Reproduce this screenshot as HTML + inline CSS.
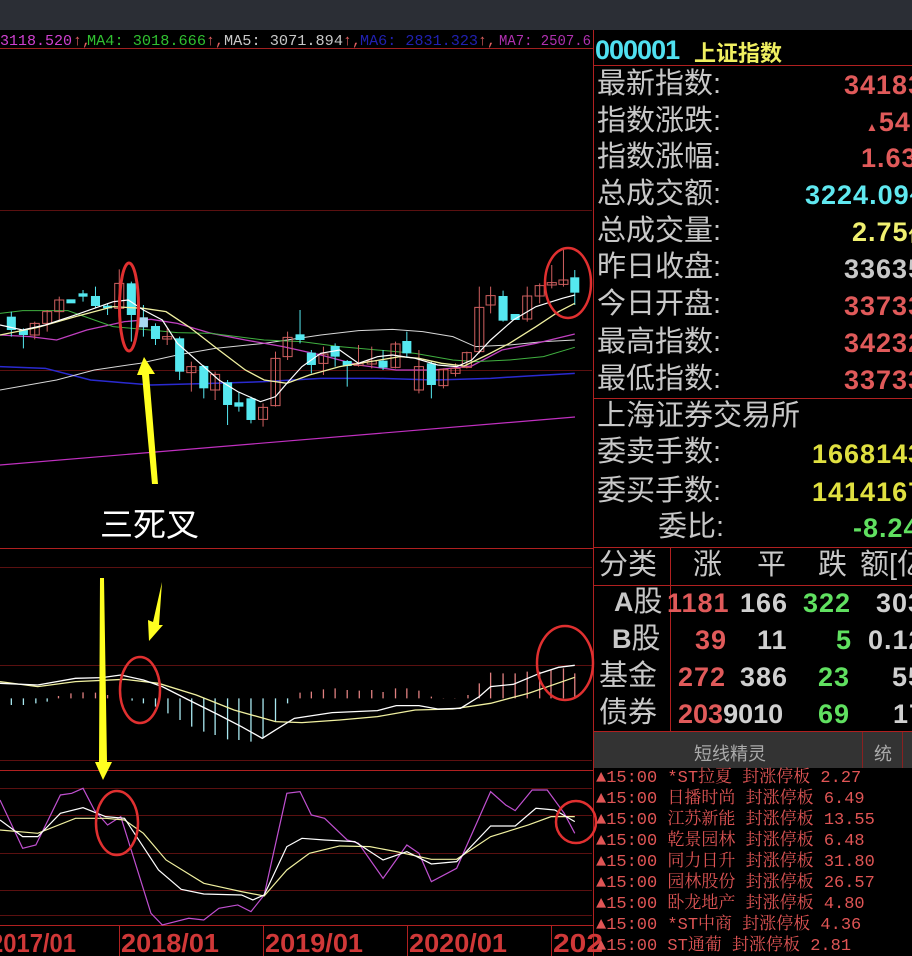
<!DOCTYPE html>
<html><head><meta charset="utf-8"><style>
html,body{margin:0;padding:0;background:#000;width:912px;height:956px;overflow:hidden;position:relative}
.t{position:absolute;white-space:nowrap;line-height:1}
.lb{font-family:"Liberation Sans","Noto Sans CJK SC",sans-serif;font-size:29px;color:#c8c8c8;left:597px}
.v{font-family:"Liberation Sans",sans-serif;font-weight:bold;font-size:27px;letter-spacing:1px}
.li{font-family:"Liberation Mono","Noto Serif CJK SC",monospace;font-size:17px;color:#e05555}
</style></head><body>
<div style="position:absolute;left:0;top:0;width:912px;height:30px;background:#2b2e35"></div>
<svg width="912" height="956" style="position:absolute;left:0;top:0">
<defs><style>.n{vector-effect:non-scaling-stroke;fill:none}</style></defs>
<g font-family="Liberation Mono,monospace" font-size="15">
<text x="0" y="45" fill="#d040d0" textLength="72" lengthAdjust="spacingAndGlyphs">3118.520</text><text x="73" y="45" fill="#e06060">↑,</text>
<text x="87" y="45" fill="#30c030" textLength="119" lengthAdjust="spacingAndGlyphs">MA4: 3018.666</text><text x="206" y="45" fill="#e06060">↑,</text>
<text x="224" y="45" fill="#c8c8c8" textLength="119" lengthAdjust="spacingAndGlyphs">MA5: 3071.894</text><text x="343" y="45" fill="#e06060">↑,</text>
<text x="360" y="45" fill="#2020b0" textLength="118" lengthAdjust="spacingAndGlyphs">MA6: 2831.323</text><text x="478" y="45" fill="#e06060">↑,</text>
<text x="499" y="45" fill="#b030b0" textLength="92" lengthAdjust="spacingAndGlyphs">MA7: 2507.6</text>
</g>
<line x1="0" y1="48.5" x2="593" y2="48.5" stroke="#a02020"/>
<g stroke="#5a1010">
<line x1="0" y1="210.5" x2="592" y2="210.5"/><line x1="0" y1="370.5" x2="592" y2="370.5"/>
<line x1="0" y1="567.5" x2="592" y2="567.5"/><line x1="0" y1="665.5" x2="592" y2="665.5"/><line x1="0" y1="760.5" x2="592" y2="760.5"/>
<line x1="0" y1="788.5" x2="592" y2="788.5"/><line x1="0" y1="815.5" x2="592" y2="815.5"/><line x1="0" y1="853.5" x2="592" y2="853.5"/><line x1="0" y1="890.5" x2="592" y2="890.5"/><line x1="0" y1="915.5" x2="592" y2="915.5"/>
</g>
<g stroke="#b02020">
<line x1="0" y1="548.5" x2="593" y2="548.5"/><line x1="0" y1="770.5" x2="593" y2="770.5"/><line x1="0" y1="925.5" x2="593" y2="925.5"/>
<line x1="593.5" y1="30" x2="593.5" y2="956"/>
<line x1="119.5" y1="926" x2="119.5" y2="956"/><line x1="263.5" y1="926" x2="263.5" y2="956"/><line x1="407.5" y1="926" x2="407.5" y2="956"/><line x1="551.5" y1="926" x2="551.5" y2="956"/>
</g>
<g font-family="Liberation Sans,sans-serif" font-weight="bold" font-size="26" fill="#d03838">
<text x="-10" y="952" textLength="86" lengthAdjust="spacingAndGlyphs">2017/01</text>
<text x="121" y="952" textLength="98" lengthAdjust="spacingAndGlyphs">2018/01</text>
<text x="265" y="952" textLength="98" lengthAdjust="spacingAndGlyphs">2019/01</text>
<text x="409" y="952" textLength="98" lengthAdjust="spacingAndGlyphs">2020/01</text>
<text x="553" y="952" textLength="50" lengthAdjust="spacingAndGlyphs">202</text>
</g>
<line x1="0" y1="465" x2="575" y2="417" stroke="#c030c0" stroke-width="1.2"/>
<g transform="translate(0,240) scale(0.3774,0.3333)">
<polyline class="n" stroke="#2a2ad0" stroke-width="1.5" points="0,380 120,385 240,420 400,435 560,430 700,425 850,415 1000,415 1150,420 1300,415 1400,408 1523,400"/>
<polyline class="n" stroke="#d8d8d8" points="0,450 150,420 250,390 370,370 470,345 570,325 700,310 850,285 950,272 1040,268 1120,275 1200,290 1260,320 1350,315 1440,305 1523,300"/>
<polyline class="n" stroke="#c040c0" stroke-width="1.3" points="0,285 80,290 150,300 230,270 330,245 400,238 470,250 560,280 650,300 750,320 850,345 950,375 1050,390 1150,390 1250,378 1330,330 1420,310 1523,282"/>
<polyline class="n" stroke="#40b040" points="0,220 60,212 180,212 250,240 300,260 380,268 470,278 560,280 700,300 800,305 900,320 1000,330 1100,340 1200,360 1260,365 1350,360 1440,350 1523,322"/>
<path class="n" stroke="#d06060" d="M92 245V298M125 210V275M157 170V240M316 88V210M443 265V315M507 365V455M570 395V480M697 490V560M730 335V500M762 275V360M857 320V405M950 315V380M985 320V385M1048 305V385M1110 330V460M1175 385V445M1207 370V410M1237 335V385M1270 140V340M1300 140V220M1397 140V245M1430 130V190M1462 75V145M1493 30V140"/>
<g fill="#000" stroke="#d06060">
<rect class="n" x="80" y="250" width="24" height="35" fill="#000"/><rect class="n" x="113" y="215" width="24" height="35" fill="#000"/><rect class="n" x="145" y="180" width="24" height="35" fill="#000"/><rect class="n" x="304" y="130" width="24" height="75" fill="#000"/><rect class="n" x="431" y="290" width="24" height="7" fill="#000"/><rect class="n" x="495" y="380" width="24" height="18" fill="#000"/><rect class="n" x="558" y="403" width="24" height="47" fill="#000"/><rect class="n" x="685" y="502" width="24" height="36" fill="#000"/><rect class="n" x="718" y="355" width="24" height="142" fill="#000"/><rect class="n" x="750" y="292" width="24" height="58" fill="#000"/><rect class="n" x="845" y="342" width="24" height="28" fill="#000"/><rect class="n" x="938" y="370" width="24" height="6" fill="#000"/><rect class="n" x="973" y="363" width="24" height="9" fill="#000"/><rect class="n" x="1036" y="312" width="24" height="70" fill="#000"/><rect class="n" x="1098" y="380" width="24" height="70" fill="#000"/><rect class="n" x="1163" y="388" width="24" height="49" fill="#000"/><rect class="n" x="1195" y="385" width="24" height="15" fill="#000"/><rect class="n" x="1225" y="338" width="24" height="44" fill="#000"/><rect class="n" x="1258" y="202" width="24" height="133" fill="#000"/><rect class="n" x="1288" y="167" width="24" height="28" fill="#000"/><rect class="n" x="1385" y="168" width="24" height="69" fill="#000"/><rect class="n" x="1418" y="137" width="24" height="31" fill="#000"/><rect class="n" x="1450" y="128" width="24" height="7" fill="#000"/><rect class="n" x="1481" y="120" width="24" height="13" fill="#000"/>
</g>
<path class="n" stroke="#55e8f0" d="M30 215V290M62 265V325M220 150V185M253 140V205M285 190V225M348 125V305M380 195V290M412 250V315M476 290V420M540 375V475M603 420V555M633 455V515M665 470V550M795 210V310M825 330V400M888 310V380M920 360V440M1015 330V390M1078 275V350M1143 365V475M1333 152V245M1523 90V195"/>
<g fill="#55e8f0">
<rect x="18" y="230" width="24" height="40"/><rect x="50" y="270" width="24" height="15"/><rect x="176" y="178" width="24" height="12"/><rect x="208" y="160" width="24" height="10"/><rect x="241" y="168" width="24" height="30"/><rect x="273" y="197" width="24" height="8"/><rect x="336" y="130" width="24" height="95"/><rect x="368" y="232" width="24" height="30" fill="#a8d8f0"/><rect x="400" y="258" width="24" height="39"/><rect x="464" y="295" width="24" height="100"/><rect x="528" y="378" width="24" height="67"/><rect x="591" y="427" width="24" height="68"/><rect x="621" y="487" width="24" height="13"/><rect x="653" y="475" width="24" height="65"/><rect x="783" y="283" width="24" height="17"/><rect x="813" y="338" width="24" height="37"/><rect x="876" y="318" width="24" height="32"/><rect x="908" y="363" width="24" height="15"/><rect x="1003" y="362" width="24" height="21"/><rect x="1066" y="303" width="24" height="37"/><rect x="1131" y="370" width="24" height="65"/><rect x="1321" y="168" width="24" height="74"/><rect x="1353" y="222" width="24" height="18"/><rect x="1511" y="112" width="24" height="46"/>
</g>
<polyline class="n" stroke="#f0f0a0" stroke-width="1.3" points="0,285 100,262 200,230 300,200 380,205 440,215 500,260 580,330 650,390 700,420 760,430 820,405 900,380 980,365 1060,350 1110,355 1170,370 1230,378 1290,345 1350,310 1420,260 1480,215 1523,190"/>
<polyline class="n" stroke="#ffffff" stroke-width="1.2" points="0,255 60,270 120,255 200,225 300,185 340,180 380,210 430,240 470,310 530,370 580,420 630,455 690,485 730,470 760,430 800,380 850,340 900,330 950,370 1000,350 1040,345 1100,355 1160,375 1210,380 1250,360 1300,300 1360,240 1420,200 1490,175 1523,165"/>
</g>
<ellipse cx="129" cy="307" rx="9.5" ry="44" fill="none" stroke="#e03030" stroke-width="3"/>
<ellipse cx="568" cy="283" rx="23" ry="35" fill="none" stroke="#e03030" stroke-width="2.5"/>
<polygon points="152,484 158,484 149,374 155,374 144,357 137,375 142,375" fill="#ffff20"/>
<text x="100" y="536" font-family="Liberation Sans,Noto Sans CJK SC,sans-serif" font-size="33" fill="#fff">三死叉</text>
<g transform="translate(0,540) scale(0.3774,0.3333)">
<path class="n" stroke="#a8e8f0" stroke-width="1.3" d="M30 475V495M62 475V495M95 475V490M125 475V485M350 475V482M380 475V490M412 475V500M445 475V520M477 475V540M508 475V560M540 475V575M570 475V585M603 475V598M633 475V600M665 475V605M697 475V595M730 475V545M762 475V490"/>
<path class="n" stroke="#e08080" stroke-width="1.3" d="M155 475V468M188 475V460M220 475V457M253 475V458M285 475V465M795 475V458M825 475V455M857 475V448M888 475V445M920 475V450M952 475V452M985 475V450M1015 475V456M1048 475V445M1078 475V445M1110 475V452M1143 475V470M1175 475V476M1205 475V476M1240 475V465M1270 475V430M1300 475V398M1333 475V400M1365 475V400M1397 475V395M1430 475V395M1460 475V390M1493 475V385M1523 475V400"/>
<polyline class="n" stroke="#f0f0a0" stroke-width="1.3" points="0,425 100,440 200,425 330,418 420,430 520,465 620,510 730,545 800,548 900,540 1000,530 1100,510 1200,507 1300,490 1400,460 1523,412"/>
<polyline class="n" stroke="#fff" stroke-width="1.3" points="0,430 100,435 200,415 270,413 320,405 380,420 430,440 500,480 580,525 640,560 695,595 730,570 780,535 880,518 1000,512 1050,497 1110,497 1160,507 1220,505 1270,470 1300,440 1360,433 1430,400 1480,382 1523,376"/>
<polyline class="n" stroke="#c050d0" stroke-width="1.2" points="0,780 60,925 95,915 160,765 190,760 220,745 250,810 285,855 320,830 400,1120 430,1155 500,1135 540,1140 580,1105 630,1095 665,1115 700,1065 760,760 795,755 825,825 860,835 920,900 950,910 1015,1015 1078,915 1110,940 1143,1025 1210,985 1300,755 1340,795 1365,812 1410,750 1450,750 1495,820 1523,880"/>
<polyline class="n" stroke="#f0f0a0" stroke-width="1.2" points="0,870 100,880 200,835 280,835 330,840 380,880 440,960 540,1030 640,1055 700,1068 760,990 820,940 900,918 980,920 1050,935 1143,958 1210,958 1300,890 1400,855 1460,830 1523,830"/>
<polyline class="n" stroke="#fff" stroke-width="1.2" points="0,840 60,890 100,890 160,820 220,803 280,830 330,835 420,990 480,1048 540,1062 640,1065 670,1080 700,1065 760,920 800,895 860,900 940,905 1015,960 1078,935 1143,972 1210,965 1300,858 1365,858 1420,805 1470,810 1523,845"/>
</g>
<ellipse cx="140" cy="690" rx="20" ry="33" fill="none" stroke="#e03030" stroke-width="2.5"/>
<ellipse cx="565" cy="663" rx="28" ry="37" fill="none" stroke="#e03030" stroke-width="2.5"/>
<ellipse cx="117" cy="823" rx="21" ry="32" fill="none" stroke="#e03030" stroke-width="2.5"/>
<ellipse cx="576" cy="822" rx="20" ry="21" fill="none" stroke="#e03030" stroke-width="2.5"/>
<polygon points="100,578 104,578 107,762 112,762 103,780 95,762 99,762" fill="#ffff20"/>
<polygon points="162,582 159,625 163,625 149,641 148,620 153,622" fill="#ffff20"/>
<g stroke="#b02020">
<line x1="594" y1="65.5" x2="912" y2="65.5"/><line x1="594" y1="398.5" x2="912" y2="398.5"/><line x1="594" y1="547.5" x2="912" y2="547.5"/><line x1="594" y1="585.5" x2="912" y2="585.5"/><line x1="594" y1="731.5" x2="912" y2="731.5"/>
<line x1="670.5" y1="548" x2="670.5" y2="731"/>
</g>
</svg>
<div class="t" style="left:595px;top:35px;font:bold 27px 'Liberation Sans',sans-serif;color:#50e0f0;letter-spacing:-1px">000001</div>
<div class="t" style="left:694px;top:36px;font:bold 22px 'Noto Sans CJK SC',sans-serif;color:#f0f060">上证指数</div>
<div class="t lb" style="top:70px">最新指数:</div>
<div class="t lb" style="top:107px">指数涨跌:</div>
<div class="t lb" style="top:143px">指数涨幅:</div>
<div class="t lb" style="top:180px">总成交额:</div>
<div class="t lb" style="top:217px">总成交量:</div>
<div class="t lb" style="top:253px">昨日收盘:</div>
<div class="t lb" style="top:290px">今日开盘:</div>
<div class="t lb" style="top:328px">最高指数:</div>
<div class="t lb" style="top:365px">最低指数:</div>
<div class="t lb" style="top:402px">上海证券交易所</div>
<div class="t lb" style="top:438px">委卖手数:</div>
<div class="t lb" style="top:477px">委买手数:</div>
<div class="t lb" style="top:513px;left:658px">委比:</div>
<div class="t v" style="left:844px;top:72px;color:#e05a5a">34183</div>
<div class="t v" style="left:866px;top:109px;color:#e05a5a"><span style="font-size:12px">▲</span>547</div>
<div class="t v" style="left:861px;top:145px;color:#e05a5a">1.63</div>
<div class="t v" style="left:805px;top:182px;color:#60e8f0">3224.09<span style="font-size:18px">亿</span></div>
<div class="t v" style="left:852px;top:219px;color:#f0f070">2.75<span style="font-size:18px">亿</span></div>
<div class="t v" style="left:844px;top:256px;color:#c8c8c8">33635</div>
<div class="t v" style="left:844px;top:293px;color:#e05a5a">33733</div>
<div class="t v" style="left:844px;top:330px;color:#e05a5a">34232</div>
<div class="t v" style="left:844px;top:367px;color:#e05a5a">33733</div>
<div class="t v" style="left:812px;top:441px;color:#e0e040">1668143</div>
<div class="t v" style="left:812px;top:479px;color:#e0e040">1414167</div>
<div class="t v" style="left:853px;top:515px;color:#60e060">-8.24</div>
<div class="t lb" style="top:551px;left:599px">分类</div>
<div class="t lb" style="top:551px;left:693px">涨</div>
<div class="t lb" style="top:551px;left:757px">平</div>
<div class="t lb" style="top:551px;left:818px">跌</div>
<div class="t lb" style="top:551px;left:860px">额[亿</div>
<div class="t lb" style="top:588px;left:614px"><b style="font-size:27px">A</b>股</div>
<div class="t lb" style="top:625px;left:612px"><b style="font-size:27px">B</b>股</div>
<div class="t lb" style="top:662px;left:599px">基金</div>
<div class="t lb" style="top:699px;left:599px">债券</div>
<div class="t v" style="left:667px;top:590px;color:#e05a5a">1181</div><div class="t v" style="left:740px;top:590px;color:#d0d0d0">166</div><div class="t v" style="left:803px;top:590px;color:#60e060">322</div><div class="t v" style="left:876px;top:590px;color:#d0d0d0">303</div>
<div class="t v" style="left:695px;top:627px;color:#e05a5a">39</div><div class="t v" style="left:757px;top:627px;color:#d0d0d0">11</div><div class="t v" style="left:836px;top:627px;color:#60e060">5</div><div class="t v" style="left:868px;top:627px;color:#d0d0d0">0.12</div>
<div class="t v" style="left:678px;top:664px;color:#e05a5a">272</div><div class="t v" style="left:740px;top:664px;color:#d0d0d0">386</div><div class="t v" style="left:818px;top:664px;color:#60e060">23</div><div class="t v" style="left:892px;top:664px;color:#d0d0d0">55</div>
<div class="t v" style="left:678px;top:701px;color:#e05a5a;letter-spacing:0">203<span style="color:#d0d0d0">9010</span></div><div class="t v" style="left:818px;top:701px;color:#60e060">69</div><div class="t v" style="left:893px;top:701px;color:#d0d0d0">17</div>
<div style="position:absolute;left:594px;top:732px;width:318px;height:36px;background:#333"></div>
<div style="position:absolute;left:862px;top:732px;width:1px;height:36px;background:#8a2020"></div>
<div style="position:absolute;left:902px;top:732px;width:1px;height:36px;background:#8a2020"></div>
<div class="t" style="left:694px;top:740px;font:18px 'Noto Sans CJK SC',sans-serif;color:#aaa">短线精灵</div>
<div class="t" style="left:874px;top:740px;font:18px 'Noto Sans CJK SC',sans-serif;color:#aaa">统</div>
<div class="t li" style="left:596px;top:770px">▲15:00 *ST拉夏  封涨停板 2.27</div>
<div class="t li" style="left:596px;top:791px">▲15:00 日播时尚 封涨停板 6.49</div>
<div class="t li" style="left:596px;top:812px">▲15:00 江苏新能 封涨停板 13.55</div>
<div class="t li" style="left:596px;top:833px">▲15:00 乾景园林 封涨停板 6.48</div>
<div class="t li" style="left:596px;top:854px">▲15:00 同力日升 封涨停板 31.80</div>
<div class="t li" style="left:596px;top:875px">▲15:00 园林股份 封涨停板 26.57</div>
<div class="t li" style="left:596px;top:896px">▲15:00 卧龙地产 封涨停板 4.80</div>
<div class="t li" style="left:596px;top:917px">▲15:00 *ST中商  封涨停板 4.36</div>
<div class="t li" style="left:596px;top:938px">▲15:00   ST通葡 封涨停板 2.81</div>
</body></html>
